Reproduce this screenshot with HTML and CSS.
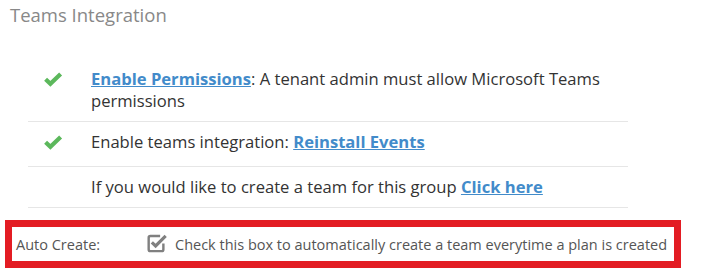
FILE: index.html
```html
<!DOCTYPE html>
<html>
<head>
<meta charset="utf-8">
<link rel="stylesheet" href="styles.css">
</head>
<body>
<div class="panel">
  <h3 class="title">Teams Integration</h3>
  <table class="steps">
    <tr class="row-first">
      <td class="icon-cell">
        <svg class="ok" viewBox="0 0 20 15" width="20" height="15"><path d="M2.6 7.2 L7.4 11.8 L17.6 2" fill="none" stroke="#5cb85c" stroke-width="4.2"/></svg>
      </td>
      <td class="text-cell"><a href="#" class="link">Enable Permissions</a>: A tenant admin must allow Microsoft Teams permissions</td>
    </tr>
    <tr>
      <td class="icon-cell">
        <svg class="ok" viewBox="0 0 20 15" width="20" height="15"><path d="M2.6 7.2 L7.4 11.8 L17.6 2" fill="none" stroke="#5cb85c" stroke-width="4.2"/></svg>
      </td>
      <td class="text-cell">Enable teams integration: <a href="#" class="link">Reinstall Events</a></td>
    </tr>
    <tr>
      <td class="icon-cell"></td>
      <td class="text-cell">If you would like to create a team for this group <a href="#" class="link">Click here</a></td>
    </tr>
  </table>
  <div class="auto-create">
    <span class="auto-label">Auto Create:</span>
    <label class="auto-check">
      <svg class="box" viewBox="0 0 20 20" width="21" height="21"><path d="M12.5 3.8 H3.2 Q1.6 3.8 1.6 5.4 V16.6 Q1.6 18.2 3.2 18.2 H14 Q15.6 18.2 15.6 16.6 V11" fill="none" stroke="#808080" stroke-width="2.3"/><path d="M4.6 9.8 L8.2 13.3 L17.8 3.7" fill="none" stroke="#808080" stroke-width="3"/></svg>
      <span>Check this box to automatically create a team everytime a plan is created</span>
    </label>
  </div>
</div>
</body>
</html>
```
FILE: styles.css
```css
html, body {
  margin: 0;
  padding: 0;
  background: #fff;
}
body {
  font-family: "Segoe UI", "Open Sans", sans-serif;
  color: #333;
}
.panel {
  padding: 0 0 0 5px;
}
.title {
  margin: 0;
  padding: 1px 0 0 5px;
  font-size: 18.5px;
  font-weight: 400;
  line-height: 27px;
  color: #888;
}
.steps {
  margin: 31px 0 0 23px;
  width: 600px;
  border-collapse: collapse;
  font-size: 16.6px;
  line-height: 22px;
}
.steps td {
  vertical-align: top;
  border-bottom: 1px solid #e6e6e6;
  padding: 9px 0 9px 0;
}
.icon-cell {
  width: 48px;
  padding-left: 15px !important;
}
.ok {
  display: block;
  margin-top: 4px;
  margin-bottom: 7px;
}
.link {
  color: #428bca;
  font-weight: 700;
  text-decoration: underline;
}
.auto-create {
  margin-top: 12px;
  width: 662px;
  height: 34px;
  border: 7px solid #e31c23;
  display: flex;
  align-items: center;
  font-size: 14.5px;
  color: #555;
}
.auto-label {
  width: 131px;
  padding-left: 4px;
}
.auto-check {
  display: flex;
  align-items: center;
  gap: 7px;
}
.box {
  display: block;
  margin-top: -3px;
}
```
